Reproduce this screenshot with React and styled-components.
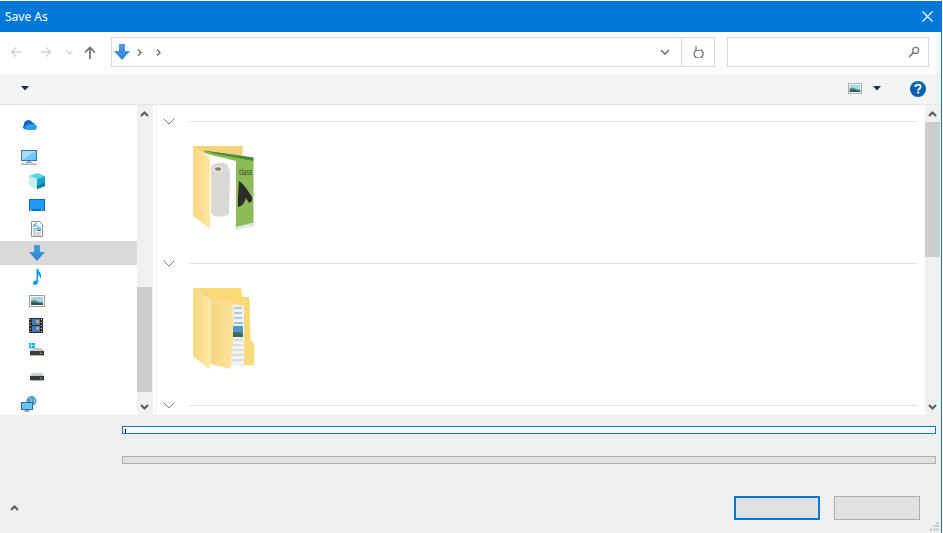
import React from "react";
import styled, { createGlobalStyle } from "styled-components";

const Global = createGlobalStyle`
  html, body { margin: 0; padding: 0; background: #fff; }
  #root { width: 943px; height: 533px; overflow: hidden; }
`;

const Window = styled.div`
  width: 943px; height: 533px; box-sizing: border-box;
  display: flex; flex-direction: column;
  padding-top: 1px; padding-right: 1px;
  background: #fff; overflow: hidden;
`;
const Inner = styled.div`
  flex: 1; min-height: 0; display: flex; flex-direction: column;
  border-right: 1px solid #0078d7; position: relative;
`;
const TitleBar = styled.header`
  height: 31px; flex: none; background: #0078d7; color: #fff;
  display: flex; align-items: center; justify-content: space-between;
  padding: 0 8px 0 5px;
  font: 12px "Noto Sans", "Open Sans", sans-serif;
`;
const Title = styled.span`letter-spacing: 0; line-height: 31px;`;
const NavRow = styled.div`
  height: 42px; flex: none; display: flex; align-items: flex-start;
  padding-top: 5px; box-sizing: border-box; background: #fff;
`;
const NavArrows = styled.div`
  width: 111px; height: 30px; flex: none; display: flex; align-items: center;
  padding: 0 0 0 10px; box-sizing: border-box;
`;
const NavBtn = styled.span`
  display: flex; margin-right: ${p => p.$mr || 0}px;
`;
const AddressBox = styled.div`
  width: 604px; height: 30px; box-sizing: border-box; flex: none;
  border: 1px solid #d9d9d9; display: flex; align-items: center;
`;
const Crumbs = styled.div`flex: 1; display: flex; align-items: center; padding-left: 2px;`;
const CrumbSep = styled.span`display: flex; margin-left: ${p => p.$ml}px;`;
const AddrBtn = styled.div`
  height: 100%; display: flex; align-items: center; justify-content: center;
  width: ${p => p.$w}px; border-left: ${p => p.$line ? "1px solid #d9d9d9" : "none"};
  box-sizing: border-box;
`;
const SearchBox = styled.div`
  width: 202px; height: 30px; margin-left: 12px; box-sizing: border-box; flex: none;
  border: 1px solid #d9d9d9; display: flex; align-items: center; justify-content: flex-end;
  padding-right: 8px;
`;
const Toolbar = styled.div`
  height: 31px; flex: none; box-sizing: border-box; background: #f3f4f6;
  border-bottom: 1px solid #e6e6e6; display: flex; align-items: center;
  padding: 0 15px 1px 21px;
`;
const Spacer = styled.div`flex: 1;`;
const ToolIcon = styled.span`display: flex; margin-left: ${p => p.$ml || 0}px;`;
const Body = styled.div`flex: 1; min-height: 0; display: flex; height: 310px;`;
const NavPane = styled.nav`
  width: 137px; flex: none; overflow: hidden; padding-top: 8px; box-sizing: border-box;
`;
const NavItem = styled.div`
  height: ${p => p.$h || 24}px; display: flex; align-items: center;
  padding-left: ${p => p.$indent ? 29 : 21}px; margin-top: ${p => p.$mt || 0}px;
  background: ${p => p.$selected ? "#d9d9d9" : "transparent"};
`;
const ScrollBar = styled.div`
  width: ${p => p.$w}px; flex: none; background: #f0f0f0; display: flex; flex-direction: column;
`;
const ScrollArrow = styled.div`
  height: 17px; flex: none; display: flex; align-items: center; justify-content: center;
  padding-right: 1px; box-sizing: border-box;
`;
const ScrollTrack = styled.div`flex: 1; min-height: 0; padding-right: 1px;`;
const ScrollThumb = styled.div`
  height: ${p => p.$h}px; margin-top: ${p => p.$top}px; background: #cdcdcd;
`;
const Divider = styled.div`
  width: 2px; flex: none; background: #fff; border-right: 1px solid #f2f2f2;
`;
const Files = styled.main`
  flex: 1; min-width: 0; overflow: hidden; padding: 7px 8px 0 7px;
`;
const Group = styled.section`height: 142px;`;
const GroupHead = styled.div`
  height: 18px; display: flex; align-items: center;
`;
const GroupLine = styled.div`flex: 1; height: 1px; background: #e3e3e3; margin-left: 14px;`;
const Thumb = styled.div`margin: 13px 0 0 28px; height: 92px; display: flex;`;
const Footer = styled.footer`
  height: 118px; flex: none; box-sizing: border-box; background: #efefef;
  padding: 11px 5px 0 0; position: relative;
`;
const Field = styled.div`
  height: 8px; box-sizing: border-box; margin: ${p => p.$mt || 0}px 0 0 122px;
  background: ${p => p.$active ? "#fff" : "#e1e1e1"};
  border: 1px solid ${p => p.$active ? "#0078d7" : "#adadad"};
  position: relative;
`;
const TextCaret = styled.span`
  position: absolute; left: 2px; top: 2px; width: 1px; height: 4px; background: #000;
`;
const BottomRow = styled.div`
  display: flex; align-items: center; height: 24px; margin-top: 32px; padding-left: 10px;
`;
const Btn = styled.button`
  width: 86px; height: 24px; padding: 0; box-sizing: border-box; background: #e1e1e1;
  border: ${p => p.$primary ? "2px solid #0078d7" : "1px solid #adadad"};
  margin-left: ${p => p.$ml}px;
`;
const Grip = styled.span`position: absolute; right: 2px; bottom: 2px; display: flex;`;

const Close = () => (
  <svg width="11" height="11" viewBox="0 0 11 11"><path d="M.5.5l10 10M10.5.5l-10 10" stroke="#fff" strokeWidth="1.1" fill="none"/></svg>
);
const ArrowLeft = ({ c = "#d5d5d5", flip }) => (
  <svg width="12" height="12" viewBox="0 0 12 12" style={flip ? { transform: "scaleX(-1)" } : undefined}>
    <path d="M11.5 6H1.5M6 1.5L1.5 6 6 10.5" stroke={c} strokeWidth="1.6" fill="none"/>
  </svg>
);
const ArrowUp = () => (
  <svg width="12" height="13" viewBox="0 0 12 13"><path d="M6 13V1.5M1 6.5l5-5 5 5" stroke="#6f6f6f" strokeWidth="1.7" fill="none"/></svg>
);
const TinyChevron = ({ c = "#d5d5d5" }) => (
  <svg width="7" height="5" viewBox="0 0 7 5"><path d="M.5 1L3.5 4l3-3" stroke={c} strokeWidth="1.2" fill="none"/></svg>
);
const CrumbChevron = () => (
  <svg width="5" height="7" viewBox="0 0 5 7"><path d="M1 .5l3 3-3 3" stroke="#666" strokeWidth="1.3" fill="none"/></svg>
);
const AddrChevron = () => (
  <svg width="10" height="6" viewBox="0 0 10 6"><path d="M1 1l4 4 4-4" stroke="#707070" strokeWidth="1.6" fill="none"/></svg>
);
const Refresh = () => (
  <svg width="11" height="12" viewBox="0 0 11 12">
    <path d="M3 3.2A4.5 4.5 0 1 0 7 3" stroke="#7a7a7a" strokeWidth="1.4" fill="none" transform="translate(.4 .6)"/>
    <path d="M3 0v4.5h4" stroke="#7a7a7a" strokeWidth="1.2" fill="none"/>
  </svg>
);
const Search = () => (
  <svg width="12" height="12" viewBox="0 0 12 12">
    <circle cx="7.6" cy="4.4" r="3" stroke="#7a7a7a" strokeWidth="1.3" fill="none"/>
    <path d="M5.4 6.6L1 11" stroke="#7a7a7a" strokeWidth="1.7"/>
  </svg>
);
const Caret = () => (
  <svg width="8" height="5" viewBox="0 0 8 5"><path d="M0 0h8L4 4.5z" fill="#1c2b4e"/></svg>
);
const Pictures = ({ w = 16, h = 12 }) => (
  <svg width={w} height={h} viewBox="0 0 16 12">
    <rect x=".5" y=".5" width="15" height="11" fill="#fff" stroke="#a0a0a0"/>
    <rect x="2" y="2" width="12" height="8" fill="#a9d4ee"/>
    <path d="M2 6c3-1.500 5-.5 7 .5s3 .5 5 .5v3H2z" fill="#5a8a78"/>
    <path d="M2 7.500c3-.5 6 .5 12 1V10H2z" fill="#2f5a50"/>
  </svg>
);
const Help = () => (
  <svg width="16" height="16" viewBox="0 0 16 16">
    <circle cx="8" cy="8" r="8" fill="#0a5fae"/>
    <path d="M5.400 6c0-1.600 1.200-2.400 2.700-2.400S10.700 4.500 10.700 5.800c0 1.800-2.500 2-2.500 3.700" stroke="#fff" strokeWidth="1.800" fill="none"/>
    <rect x="7.200" y="10.500" width="2" height="2" fill="#fff"/>
  </svg>
);
const Chevron = ({ up }) => (
  <svg width="9" height="6" viewBox="0 0 9 6" style={up ? { transform: "scaleY(-1)" } : undefined}>
    <path d="M1 1l3.500 3.500L8 1" stroke="#5a5a5a" strokeWidth="2" fill="none"/>
  </svg>
);
const GroupChevron = () => (
  <svg width="12" height="7" viewBox="0 0 12 7"><path d="M.5.5L6 6l5.500-5.500" stroke="#808080" strokeWidth="1" fill="none"/></svg>
);
const OneDrive = () => (
  <svg width="16" height="12" viewBox="0 0 16 12">
    <path d="M3 6a4.500 4.500 0 0 1 8.500-2.400A3.500 3.500 0 0 1 14 5.500L6 10H3a2.800 2.800 0 0 1 0-4z" fill="#0d63c2"/>
    <path d="M5.500 11A2.500 2.500 0 0 1 5 6.500c1.500-1.500 4-2 5.500-1.200 2-1 5.500 0 5.500 3a3 3 0 0 1-2 2.700z" fill="#2d9ce8"/>
  </svg>
);
const Computer = ({ small }) => (
  <svg width="16" height="15" viewBox="0 0 16 15">
    <rect x=".5" y=".5" width="15" height="10" fill="#6ec6ff" stroke="#3579a8"/>
    <path d="M1 1h14L1 10z" fill="#a6deff"/>
    <rect x="6.500" y="11" width="3" height="1.500" fill="#8aa2b4"/>
    <rect x="4.500" y="12" width="7" height="1" fill="#8aa2b4"/>
    {!small && <rect y="13.500" width="16" height="1.500" fill="#aab5bf"/>}
  </svg>
);
const Cube = () => (
  <svg width="16" height="16" viewBox="0 0 16 16">
    <path d="M8 0l8 3-8 3-8-3z" fill="#5ad3e2"/>
    <path d="M0 3l8 3v10l-8-3z" fill="#c8eeef"/>
    <path d="M16 3L8 6v10l8-3z" fill="#10a5c4"/>
    <path d="M16 9l-8 4v3l8-3z" fill="#077f9c"/>
  </svg>
);
const Desktop = () => (
  <svg width="16" height="12" viewBox="0 0 16 12">
    <rect width="16" height="12" fill="#0a6fc0"/>
    <rect x="1" y="1" width="14" height="9" fill="#1e9bff"/>
    <rect x="1" y="10.500" width="1.500" height="1" fill="#fff"/>
    <rect x="12" y="10.500" width="1.500" height="1" fill="#fff"/>
  </svg>
);
const Doc = () => (
  <svg width="16" height="16" viewBox="0 0 16 16">
    <path d="M2.500.5h8l3 3v12h-11z" fill="#fff" stroke="#8f8f8f"/>
    <path d="M4 5l3-3v3zM8 5h2M8 7h4M4 8h8" stroke="#3f9be0" strokeWidth="1" fill="none"/>
    <path d="M8 9.500h4" stroke="#1d70c0" strokeWidth="1"/>
    <path d="M4 10h3M4 12h8M4 14h8" stroke="#a9a9a9" strokeWidth="1"/>
  </svg>
);
const Download = () => (
  <svg width="16" height="16" viewBox="0 0 16 16">
    <defs><linearGradient id="dl" x1="0" y1="0" x2="0" y2="1"><stop offset="0" stopColor="#4a9fe6"/><stop offset="1" stopColor="#2d7fd0"/></linearGradient></defs>
    <path d="M5 0h6v7h5l-8 9-8-9h5z" fill="url(#dl)"/>
  </svg>
);
const Music = () => (
  <svg width="16" height="16" viewBox="0 0 16 16">
    <path d="M7.500 0h1.800c.3 3 3.700 3.800 2.700 8-.3 1-.8 1.500-1 1.500.3-2-.8-3.500-1.900-4v7.500c0 2-1.800 3-3.300 3C4.500 16 4 15 4 14c0-1.500 2-2.800 3.500-2.300z" fill="#0d99f2"/>
  </svg>
);
const Film = () => (
  <svg width="14" height="15" viewBox="0 0 14 15">
    <rect width="14" height="15" fill="#2b2b2b"/>
    <rect x="3" y="1" width="8" height="6" fill="#3a78c8"/>
    <rect x="3" y="8" width="8" height="6" fill="#3a78c8"/>
    <rect x="7" y="2" width="3" height="3" fill="#d7a72a"/>
    <rect x="7" y="9" width="3" height="3" fill="#c9a53a"/>
    <path d="M1 1v1M1 4v1M1 7v1M1 10v1M1 13v1M12.500 1v1M12.500 4v1M12.500 7v1M12.500 10v1M12.500 13v1" stroke="#ddd" strokeWidth="1"/>
  </svg>
);
const Drive = ({ win }) => (
  <svg width="16" height="13" viewBox="0 0 16 13">
    {win && <path d="M0 0h2.500v2.500H0zM3 0h3v2.500H3zM0 3h2.500v2.500H0zM3 3h3v2.500H3z" fill="#12b7f5"/>}
    <path d="M3 5h10l2 3H1z" fill="#c8ccd0"/>
    <rect x="1" y="8" width="14" height="4" fill="#3a3a3a"/>
    <rect x="1" y="12" width="14" height="1" fill="#b5b5b5"/>
    <rect x="11" y="9.500" width="1.500" height="1.500" fill="#3ed04a"/>
  </svg>
);
const Network = () => (
  <svg width="16" height="16" viewBox="0 0 16 16">
    <circle cx="10.500" cy="5" r="5" fill="#4d9bc9"/>
    <path d="M8 1.500c2 1 3 3 2 5M13 2c1 2 1 4 0 6" stroke="#bfe0f0" strokeWidth=".8" fill="none"/>
    <rect x=".5" y="6.500" width="11" height="7" fill="#6cc4fb" stroke="#2f6f9f"/>
    <rect x="4" y="14" width="4" height="1" fill="#6d97b4"/>
    <rect x="3" y="15" width="6" height="1" fill="#a0b8c8"/>
  </svg>
);

const BrochureFolder = () => (
  <svg width="68" height="90" viewBox="190 142 68 90">
    <defs>
      <linearGradient id="flap" x1="0" y1="0" x2="1" y2="0"><stop offset="0" stopColor="#f7d680"/><stop offset="1" stopColor="#ffe8a3"/></linearGradient>
    </defs>
    <path d="M192 145h49.500v14H192z" fill="#f3d27c"/>
    <path d="M235 222l18-1v4l-18 4z" fill="#d0d0cc" opacity=".6"/>
    <path d="M203 149.500l49.500 7v65L235 226z" fill="#8dbb58"/>
    <path d="M203 149.500l49.500 7v3.500L215 153z" fill="#4c8a3a"/>
    <path d="M238 180c5 3 9 10 13 16v4l-3 2-3-5c-2 6-4 8-8 9v-10z" fill="#2c2c2a"/>
    <text x="238" y="174" fontFamily="Liberation Sans Narrow, Liberation Sans, sans-serif" fontSize="9" fill="#2a4a20" textLength="13" lengthAdjust="spacingAndGlyphs">class</text>
    <path d="M200 151.500l35 8.500v69l-26-8z" fill="#fff"/>
    <path d="M210 166c2-4 12-6 15-3 3 2 4 6 4 10l-1 40c-4 3-10 3-15 2l-3-3z" fill="#d8d8d4"/>
    <ellipse cx="217" cy="168" rx="5" ry="3" fill="#e9e9e5"/>
    <ellipse cx="217" cy="168" rx="3" ry="1.800" fill="#8a7a60"/>
    <path d="M192 145l17 12v71l-17-13z" fill="url(#flap)"/>
  </svg>
);
const PlainFolder = () => (
  <svg width="68" height="90" viewBox="190 142 68 90" style={{ marginTop: 0 }}>
    <defs>
      <linearGradient id="flap2" x1="0" y1="0" x2="1" y2="0"><stop offset="0" stopColor="#f8d880"/><stop offset="1" stopColor="#ffe9a6"/></linearGradient>
      <linearGradient id="flap3" x1="0" y1="0" x2="1" y2="0"><stop offset="0" stopColor="#f2d27c"/><stop offset="1" stopColor="#ffe29a"/></linearGradient>
    </defs>
    <path d="M192 145h48l1.500 9h7l1 42 3.500 5v21h-29z" fill="#f9d978"/>
    <path d="M232 161l11 2v62l-13-4-1-20z" fill="#f3f3f1"/>
    <path d="M233 165h8M233 170h8M233 175h8" stroke="#63a8d8" strokeWidth="1"/>
    <path d="M233 180h9" stroke="#3c90d0" strokeWidth="1"/>
    <rect x="232" y="183" width="10" height="11" fill="#4d98cc"/>
    <path d="M232 190c3-2 7-1 10 1v3h-10z" fill="#3d6b5f"/>
    <path d="M231 197h11M231 202h11M231 207h11M231 212h11M231 217h11" stroke="#c4c4c4" strokeWidth="1"/>
    <path d="M200.500 149l31.500 11v41l-3 25-19-5z" fill="url(#flap3)"/>
    <path d="M192 145l18 11v64l-2 6-16-13z" fill="url(#flap2)"/>
  </svg>
);
const GripIcon = () => (
  <svg width="9" height="9" viewBox="0 0 9 9" fill="#bdbdbd">
    <rect x="6.500" y="0" width="2" height="2"/><rect x="3.500" y="3" width="2" height="2"/><rect x="6.500" y="3" width="2" height="2"/>
    <rect x="0" y="6.500" width="2" height="2"/><rect x="3.500" y="6.500" width="2" height="2"/><rect x="6.500" y="6.500" width="2" height="2"/>
  </svg>
);

function Scroll({ w, top, h }) {
  return (
    <ScrollBar $w={w}>
      <ScrollArrow><Chevron up /></ScrollArrow>
      <ScrollTrack><ScrollThumb $top={top} $h={h} /></ScrollTrack>
      <ScrollArrow><Chevron /></ScrollArrow>
    </ScrollBar>
  );
}

export default function App() {
  return (
    <>
      <Global />
      <Window>
        <Inner>
          <TitleBar><Title>Save As</Title><Close /></TitleBar>
          <NavRow>
            <NavArrows>
              <NavBtn $mr={18}><ArrowLeft /></NavBtn>
              <NavBtn $mr={14}><ArrowLeft flip /></NavBtn>
              <NavBtn $mr={11}><TinyChevron /></NavBtn>
              <NavBtn><ArrowUp /></NavBtn>
            </NavArrows>
            <AddressBox>
              <Crumbs>
                <Download />
                <CrumbSep $ml={7}><CrumbChevron /></CrumbSep>
                <CrumbSep $ml={14}><CrumbChevron /></CrumbSep>
              </Crumbs>
              <AddrBtn $w={32}><AddrChevron /></AddrBtn>
              <AddrBtn $w={33} $line><Refresh /></AddrBtn>
            </AddressBox>
            <SearchBox><Search /></SearchBox>
          </NavRow>
          <Toolbar>
            <Caret />
            <Spacer />
            <Pictures w={14} h={11} />
            <ToolIcon $ml={11}><Caret /></ToolIcon>
            <ToolIcon $ml={29}><Help /></ToolIcon>
          </Toolbar>
          <Body>
            <NavPane>
              <NavItem><OneDrive /></NavItem>
              <NavItem $mt={8}><Computer /></NavItem>
              <NavItem $indent><Cube /></NavItem>
              <NavItem $indent><Desktop /></NavItem>
              <NavItem $indent><Doc /></NavItem>
              <NavItem $indent $selected><Download /></NavItem>
              <NavItem $indent><Music /></NavItem>
              <NavItem $indent><Pictures /></NavItem>
              <NavItem $indent><Film /></NavItem>
              <NavItem $indent $h={25}><Drive win /></NavItem>
              <NavItem $indent $h={25}><Drive /></NavItem>
              <NavItem $mt={5}><Network /></NavItem>
            </NavPane>
            <Scroll w={16} top={165} h={105} />
            <Divider />
            <Files>
              <Group>
                <GroupHead><GroupChevron /><GroupLine /></GroupHead>
                <Thumb><BrochureFolder /></Thumb>
              </Group>
              <Group>
                <GroupHead><GroupChevron /><GroupLine /></GroupHead>
                <Thumb><PlainFolder /></Thumb>
              </Group>
              <Group>
                <GroupHead><GroupChevron /><GroupLine /></GroupHead>
              </Group>
            </Files>
            <Scroll w={16} top={0} h={135} />
          </Body>
          <Footer>
            <Field $active><TextCaret /></Field>
            <Field $mt={22} />
            <BottomRow>
              <Chevron up />
              <Spacer />
              <Btn $primary $ml={0} />
              <Btn $ml={14} />
              <Spacer style={{ flex: "none", width: 16 }} />
            </BottomRow>
            <Grip><GripIcon /></Grip>
          </Footer>
        </Inner>
      </Window>
    </>
  );
}
